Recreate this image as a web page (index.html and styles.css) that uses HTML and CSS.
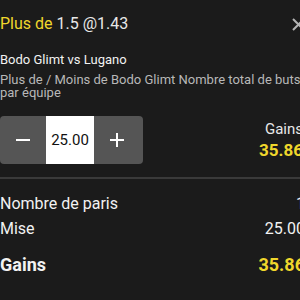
FILE: index.html
```html
<!DOCTYPE html>
<html>
<head>
<meta charset="utf-8">
<link rel="stylesheet" href="styles.css">
</head>
<body>
<div class="slip">
  <div class="head">
    <div class="title"><span class="pick">Plus de</span> 1.5 @1.43</div>
    <svg class="close" width="13" height="13" viewBox="0 0 13 13"><path d="M1 1L12 12M12 1L1 12" stroke="#b5b5b5" stroke-width="2"/></svg>
  </div>
  <div class="event">Bodo Glimt vs Lugano</div>
  <div class="market">Plus de / Moins de Bodo Glimt Nombre total de buts par équipe</div>
  <div class="stake-row">
    <div class="stepper">
      <div class="btn"><svg width="14" height="14" viewBox="0 0 14 14"><path d="M0 7H14" stroke="#fff" stroke-width="2"/></svg></div>
      <div class="input">25.00</div>
      <div class="btn"><svg width="14" height="14" viewBox="0 0 14 14"><path d="M0 7H14M7 0V14" stroke="#fff" stroke-width="2"/></svg></div>
    </div>
    <div class="returns">
      <div class="label">Gains</div>
      <div class="amount">35.86</div>
    </div>
  </div>
  <div class="sep"></div>
  <div class="row first"><span>Nombre de paris</span><span>1</span></div>
  <div class="row"><span>Mise</span><span>25.00</span></div>
  <div class="row total"><span>Gains</span><span class="yellow">35.86</span></div>
</div>
</body>
</html>
```
FILE: styles.css
```css
html, body {
  margin: 0;
  padding: 0;
  background: #1b1b1b;
  overflow: hidden;
  width: 300px;
  height: 300px;
}
.slip {
  width: 305px;
  font-family: Roboto, "Liberation Sans", sans-serif;
  color: #fff;
}
.head {
  display: flex;
  justify-content: space-between;
  align-items: center;
  padding-top: 14px;
}
.title {
  font-size: 16px;
  line-height: 20px;
  color: #e8e8e8;
}
.pick { color: #f0d72c; }
.close { margin-top: 1px; }
.event {
  margin-top: 18px;
  font-size: 13px;
  line-height: 16px;
  color: #f2f2f2;
}
.market {
  margin-top: 5px;
  font-size: 13px;
  line-height: 13px;
  color: #b8b8b8;
}
.stake-row {
  display: flex;
  justify-content: space-between;
  align-items: center;
  margin-top: 17px;
}
.stepper {
  display: flex;
  height: 48px;
  width: 143px;
  border-radius: 4px;
  overflow: hidden;
  background: #555;
}
.btn {
  width: 46px;
  display: flex;
  align-items: center;
  justify-content: center;
}
.input {
  width: 48px;
  background: #fff;
  color: #111;
  font-size: 15px;
  display: flex;
  align-items: center;
  justify-content: center;
}
.returns {
  text-align: right;
  padding-right: 2px;
}
.label {
  font-size: 15px;
  line-height: 20px;
  color: #e8e8e8;
}
.amount {
  font-size: 17px;
  line-height: 22px;
  font-weight: bold;
  color: #f0d72c;
}
.sep {
  height: 2px;
  background: #3a3a3a;
  margin-top: 13px;
}
.row {
  display: flex;
  justify-content: space-between;
  font-size: 16px;
  line-height: 25px;
  color: #f2f2f2;
}
.row.first { margin-top: 12px; }
.total {
  font-size: 18px;
  font-weight: bold;
  margin-top: 11px;
}
.yellow { color: #f0d72c; }
```
